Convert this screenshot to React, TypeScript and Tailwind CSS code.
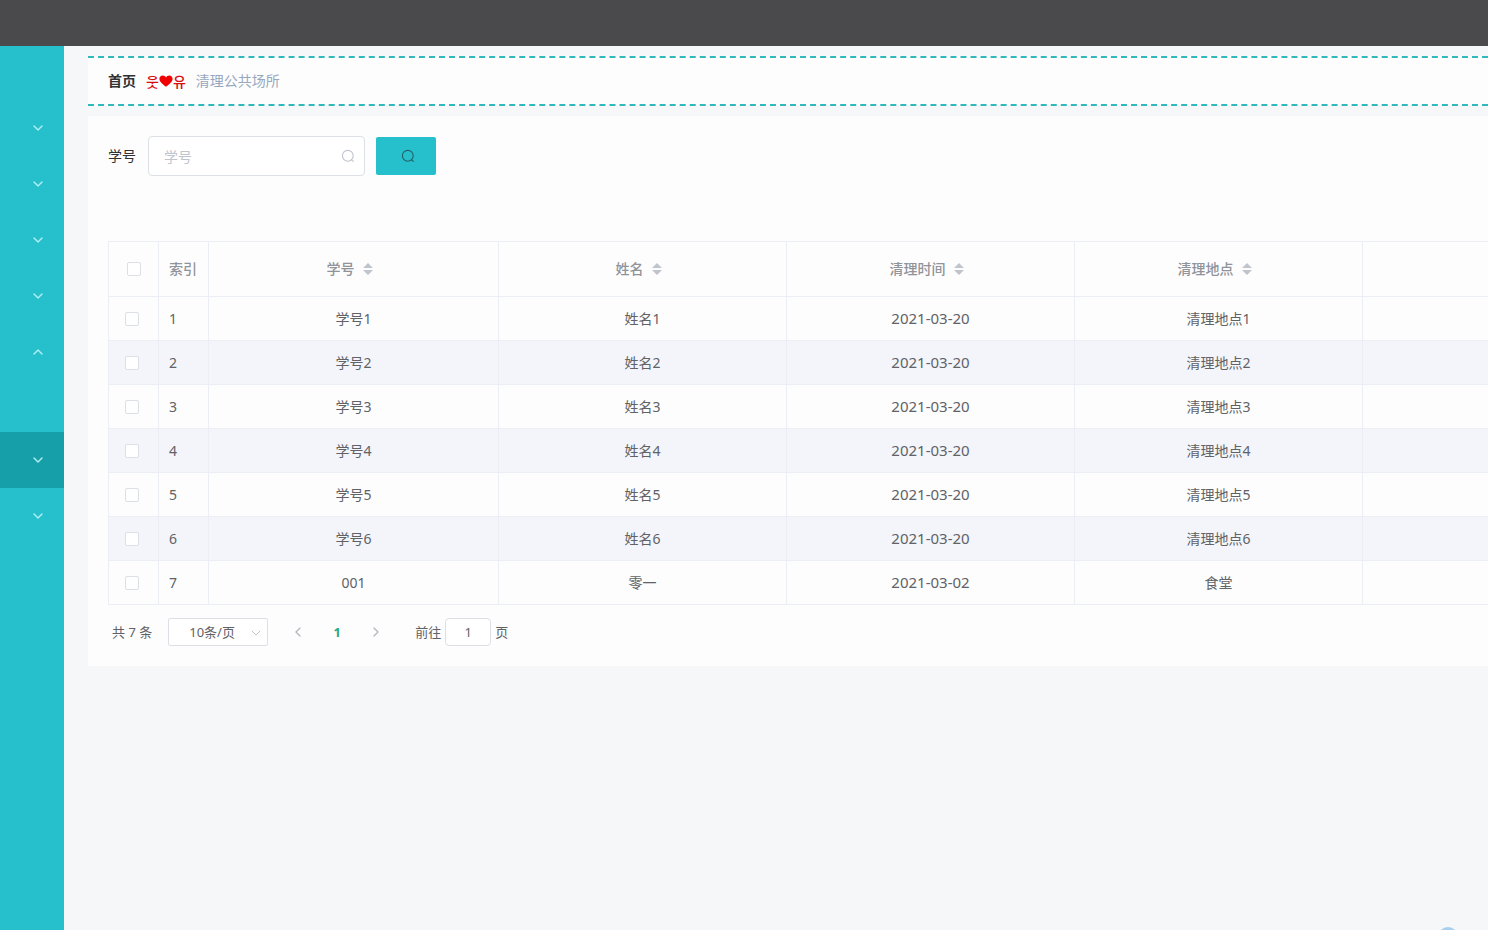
import { useState } from 'react';
import { ChevronDown, ChevronLeft, ChevronRight, ChevronUp } from 'lucide-react';

const rows = [
  ...[1, 2, 3, 4, 5, 6].map((n) => ({
    no: `学号${n}`,
    name: `姓名${n}`,
    date: '2021-03-20',
    place: `清理地点${n}`,
  })),
  { no: '001', name: '零一', date: '2021-03-02', place: '食堂' },
];

const columns = ['学号', '姓名', '清理时间', '清理地点'];

const cell = 'border-r border-b border-[#ebeef5]';
const checkbox =
  'block h-[14px] w-[14px] appearance-none rounded-xs border border-[#dcdfe6] bg-white checked:bg-[#23c0cc]';

function SearchIcon() {
  return (
    <svg viewBox="0 0 14 14" className="h-[14px] w-[14px]" fill="none" stroke="currentColor" strokeWidth="1.1">
      <circle cx="6.8" cy="6.8" r="5.4" />
      <path d="M10.4 10.8l2 1.6" strokeLinecap="round" />
    </svg>
  );
}

function HeartIcon() {
  return (
    <svg viewBox="0 0 14 12" className="h-3 w-[14px]" fill="#f00000">
      <path d="M7 11.8C4.6 9.8.4 7.2.4 3.8.4 1.8 1.9.4 3.7.4 5.200.4 6.400 1.200 7 2.400 7.600 1.200 8.800.4 10.300.4c1.800 0 3.300 1.400 3.300 3.400 0 3.400-4.200 6-6.600 8z" />
    </svg>
  );
}

function SortIcon() {
  return (
    <svg viewBox="0 0 10 12" className="h-3 w-[10px]" fill="#c0c4cc">
      <path d="M5 0l5 5H0zM5 12l5-5H0z" />
    </svg>
  );
}

function MenuItem({ label, open = false, active = false }: { label: string; open?: boolean; active?: boolean }) {
  const Icon = open ? ChevronUp : ChevronDown;
  return (
    <button
      aria-label={label}
      aria-expanded={open}
      className={`flex h-14 w-full items-center justify-end pr-[18px] text-[#b5f1f4] ${active ? 'bg-[#179fa9]' : ''}`}
    >
      <Icon className="h-4 w-4" strokeWidth={2} />
    </button>
  );
}

export default function App() {
  const [keyword, setKeyword] = useState('');
  const [page, setPage] = useState('1');

  return (
    <div className="flex min-h-screen flex-col overflow-hidden bg-[#f5f7f9] font-['Noto_Sans','Noto_Sans_CJK_SC',sans-serif] text-sm text-[#606266]">
      <header className="h-[46px] shrink-0 bg-[#4a4a4c]" />

      <div className="flex flex-1">
        {/* Sidebar */}
        <nav className="w-16 shrink-0 bg-[#25c0cc] pt-[54px]">
          <MenuItem label="菜单一" />
          <MenuItem label="菜单二" />
          <MenuItem label="菜单三" />
          <MenuItem label="菜单四" />
          <MenuItem label="菜单五" open />
          <a href="#" aria-label="子菜单" className="block h-[52px]" />
          <MenuItem label="菜单六" active />
          <MenuItem label="菜单七" />
        </nav>

        <main className="min-w-0 flex-1 pt-[10px] pl-6">
          {/* Breadcrumb */}
          <div className="flex h-[50px] items-center gap-[10px] border-y-2 border-dashed border-[#2fb9bd] bg-[#fdfdfe] pl-5">
            <a href="#" className="font-bold text-[#303133]">首页</a>
            <span className="flex items-center font-['Noto_Sans_CJK_KR',sans-serif] font-medium text-[#d80c0c]">
              웃
              <HeartIcon />
              유
            </span>
            <span className="text-[#97a8be]">清理公共场所</span>
          </div>

          <section className="mt-[10px] bg-[#fdfdfe] pt-5 pb-5 pl-5">
            <form className="flex items-center" onSubmit={(e) => e.preventDefault()}>
              <label htmlFor="keyword" className="mr-3 text-[#303133]">学号</label>
              <div className="relative mr-[11px]">
                <input
                  id="keyword"
                  value={keyword}
                  onChange={(e) => setKeyword(e.target.value)}
                  placeholder="学号"
                  className="block h-10 w-[217px] rounded-sm border border-[#dcdfe6] bg-white pr-8 pl-[15px] outline-none placeholder:text-[#c0c4cc]"
                />
                <span className="absolute inset-y-0 right-[10px] flex items-center text-[#c0c4cc]">
                  <SearchIcon />
                </span>
              </div>
              <button
                aria-label="查询"
                className="flex h-[38px] w-[60px] items-center justify-center rounded-xs bg-[#25c0cc] pl-1 text-[#24606a]"
              >
                <SearchIcon />
              </button>
            </form>

            {/* Table */}
            <table className="mt-[65px] w-full table-fixed border-separate border-spacing-0 border-t border-l border-[#ebeef5] text-center">
              <colgroup>
                <col className="w-[50px]" />
                <col className="w-[50px]" />
                <col className="w-[290px]" />
                <col className="w-[288px]" />
                <col className="w-[288px]" />
                <col className="w-[288px]" />
                <col />
              </colgroup>
              <thead className="text-[#909399]">
                <tr className="h-[55px]">
                  <th className={`${cell} pl-[18px]`}>
                    <input type="checkbox" aria-label="全选" className={checkbox} />
                  </th>
                  <th className={`${cell} pl-[10px] text-left font-medium`}>索引</th>
                  {columns.map((c) => (
                    <th key={c} className={`${cell} pr-2 font-medium`}>
                      <span className="flex items-center justify-center gap-2">
                        {c}
                        <SortIcon />
                      </span>
                    </th>
                  ))}
                  <th className="border-b border-[#ebeef5]" />
                </tr>
              </thead>
              <tbody>
                {rows.map((r, i) => (
                  <tr key={r.no} className="h-11 even:bg-[#f3f5fb]">
                    <td className={`${cell} pl-4`}>
                      <input type="checkbox" aria-label={`选择${r.no}`} className={checkbox} />
                    </td>
                    <td className={`${cell} pl-[10px] text-left`}>{i + 1}</td>
                    <td className={cell}>{r.no}</td>
                    <td className={cell}>{r.name}</td>
                    <td className={`${cell} text-[15px]`}>{r.date}</td>
                    <td className={cell}>{r.place}</td>
                    <td className="border-b border-[#ebeef5]" />
                  </tr>
                ))}
              </tbody>
            </table>

            {/* Pagination */}
            <div className="mt-[13px] flex h-7 items-center pl-1 text-[13px]">
              <span>共 7 条</span>
              <div className="relative ml-4">
                <select
                  aria-label="每页条数"
                  className="block h-7 w-[100px] appearance-none rounded-xs border border-[#dcdfe6] bg-white pl-5 outline-none"
                >
                  <option>10条/页</option>
                  <option>20条/页</option>
                </select>
                <ChevronDown className="pointer-events-none absolute top-[7px] right-1 h-4 w-4 text-[#c0c4cc]" strokeWidth={1.5} />
              </div>
              <button aria-label="上一页" className="ml-[22px] text-[#b4b8c0]">
                <ChevronLeft className="h-4 w-4" />
              </button>
              <button className="mx-[23px] w-4 font-bold text-[#2ba884]">1</button>
              <button aria-label="下一页" className="text-[#b4b8c0]">
                <ChevronRight className="h-4 w-4" />
              </button>
              <label htmlFor="page" className="mr-1 ml-[31px]">前往</label>
              <input
                id="page"
                value={page}
                onChange={(e) => setPage(e.target.value)}
                className="h-7 w-[46px] rounded-sm border border-[#dcdfe6] bg-white text-center outline-none"
              />
              <span className="ml-1">页</span>
            </div>
          </section>
        </main>
      </div>

      <button aria-label="返回顶部" className="fixed right-[30px] -bottom-[17px] h-5 w-5 rounded-full bg-[#a9cfee]" />
    </div>
  );
}
